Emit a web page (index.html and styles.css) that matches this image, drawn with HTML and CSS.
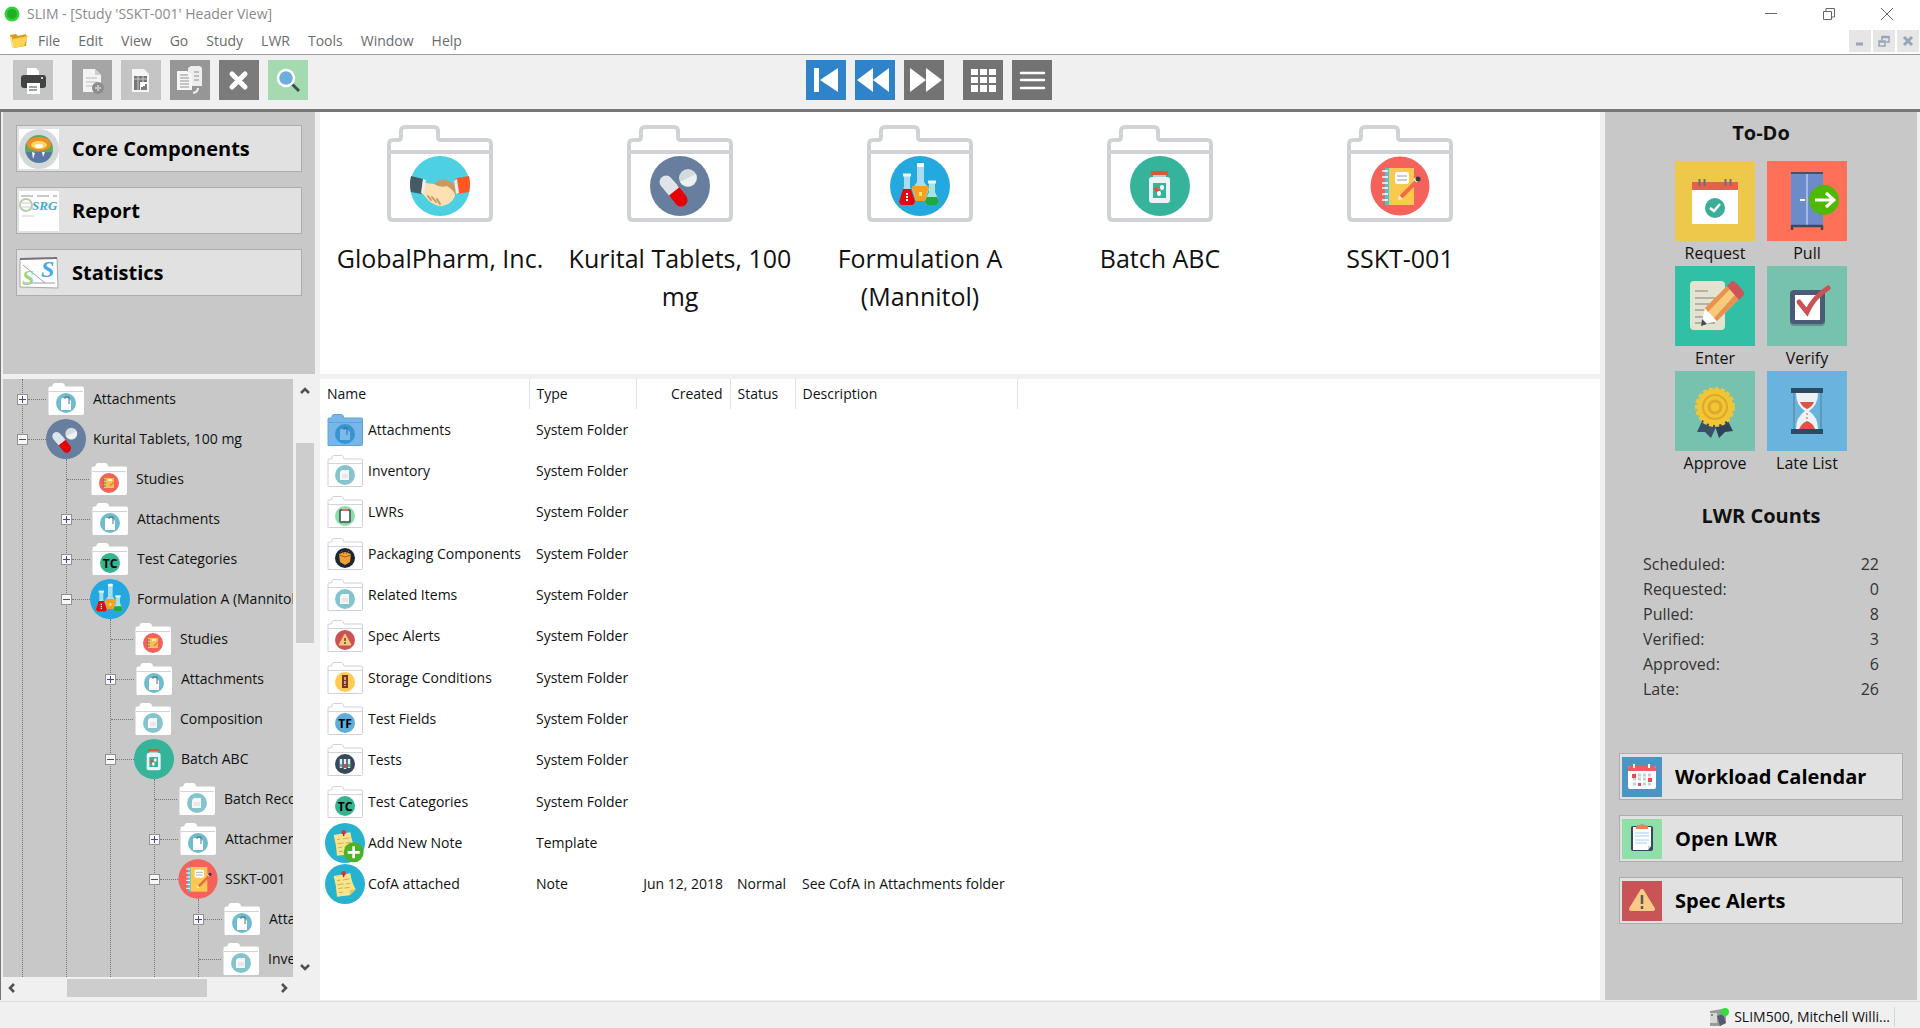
FILE: index.html
```html
<!DOCTYPE html>
<html lang="en">
  <head>
    <meta charset="UTF-8" />
    <meta name="viewport" content="width=device-width, initial-scale=1.0" />
    <title>SLIM - [Study 'SSKT-001' Header View]</title>
    <link rel="stylesheet" href="styles.css">
  </head>
  <body>
    <!-- shared icons -->
    <svg class="sprite" width="0" height="0" aria-hidden="true">
      <symbol id="client" viewBox="0 0 60 60">
        <circle cx="30" cy="30" r="30" fill="#4dd0e1" />
        <path d="M1 20L13 23L12 38L1 36Q-1 28 1 20Z" fill="#455a64" />
        <path d="M59 20L47 22L44 25L47 38L59 36Q61 28 59 20Z" fill="#ff5722" />
        <path d="M24 28Q30 22 36 24L45 28L46 38L38 42L27 36Z" fill="#c89a63" />
        <path d="M13 25L15 27L24 28Q30 32 37 30Q46 36 45 40Q42 48 32 50Q27 51 19 45L12 37Z" fill="#ffe0b2" />
        <path d="M18 40l3 4M22 41l4 5M27 43l3 5" stroke="#c89a63" stroke-width="2" fill="none" stroke-linecap="round" />
        <path d="M13 23l3 1l-2 14l-3-1z" fill="#eceff1" />
        <path d="M44 25l3-2l2 14l-3 1z" fill="#eceff1" />
      </symbol>
      <symbol id="pills" viewBox="0 0 60 60">
        <circle cx="30" cy="30" r="30" fill="#677e9e" />
        <path d="M16 26L24 35" stroke="#dde5ea" stroke-width="13" stroke-linecap="round" />
        <path d="M31 44L24 35" stroke="#e60000" stroke-width="13" stroke-linecap="round" />
        <path d="M19 39.500L29 31.500L24 25.500L14 33.500Z" fill="#dde5ea" />
        <circle cx="38" cy="22" r="9" fill="#d3dbde" />
        <path d="M30 26L46 18A9 9 0 0 1 30 26Z" fill="#eef1f2" />
      </symbol>
      <symbol id="flasks" viewBox="0 0 60 60">
        <circle cx="30" cy="30" r="30" fill="#24a8e0" />
        <path d="M27 9H34V26L39 33L35 45H26L22 33L27 26Z" fill="#a9dcf0" />
        <path d="M22 30H39L35 45H26Z" fill="#f9a01b" />
        <rect x="27" y="7" width="7" height="4" rx="1" fill="#fff" />
        <path d="M14 20H20V31L25 45Q25 49 22 49H12Q9 49 9 45L14 31Z" fill="#a9dcf0" />
        <path d="M13 33H21L25 45Q25 49 22 49H12Q9 49 9 45Z" fill="#e30613" />
        <path d="M13 19H21" stroke="#e8f6fb" stroke-width="3" />
        <path d="M17 37v8" stroke="#fff" stroke-width="2" stroke-dasharray="2 1" />
        <path d="M39 27H45V36L49 45Q49 49 46 49H38Q35 49 35 45L39 36Z" fill="#a9e4dc" />
        <path d="M37 41H47L49 45Q49 49 46 49H38Q35 49 35 45Z" fill="#1fa849" />
        <path d="M38 26H46" stroke="#e8f6fb" stroke-width="3" />
        <path d="M29 36h3v4h-3z" fill="#ffe08a" />
      </symbol>
      <symbol id="bottle" viewBox="0 0 60 60">
        <circle cx="30" cy="30" r="30" fill="#36b39b" />
        <rect x="21" y="15" width="17" height="4" fill="#d9583e" />
        <rect x="23" y="19" width="13" height="3" fill="#b8cfcf" />
        <rect x="19" y="21" width="21" height="26" rx="3" fill="#ecf3f6" />
        <rect x="23" y="27" width="13" height="15" fill="#36b39b" />
        <path d="M26 33l2 2" stroke="#d9583e" stroke-width="4" stroke-linecap="round" />
        <path d="M29 37l0 1M32 31l0 1" stroke="#fff" stroke-width="4" stroke-linecap="round" />
      </symbol>
      <symbol id="notebook" viewBox="0 0 60 60">
        <circle cx="30" cy="30" r="29.500" fill="#f5625c" />
        <rect x="15" y="12" width="5" height="37" fill="#4fc3d9" />
        <rect x="19" y="12" width="25" height="37" fill="#fcc94f" />
        <path d="M12 15h6M12 21h6M12 27h6M12 32h6M12 38h6M12 44h6" stroke="#fff" stroke-width="1.500" />
        <rect x="25" y="16" width="14" height="12" rx="2" fill="#fff" />
        <path d="M27 20h10M27 24h10" stroke="#8aa0ab" stroke-width="1.200" />
        <path d="M31 41L46 26" stroke="#ee6b45" stroke-width="4" />
        <path d="M28 44l1-5l4 4z" fill="#ffe9c8" />
        <path d="M45 25l2-2" stroke="#fff" stroke-width="4" />
        <circle cx="48" cy="23" r="2.500" fill="#3b3b3b" />
      </symbol>
      <symbol id="note" viewBox="0 0 60 60">
        <circle cx="30" cy="30" r="30" fill="#27b3d0" />
        <path d="M13 18L38 14Q40 28 46 38L37 47L18 49Q17 32 13 18Z" fill="#f9e48c" />
        <path d="M37 47L46 38L37 39Z" fill="#e2c765" />
        <path d="M18 25l5-1M27 24l10-2M19 31l9-1M31 30l7-1M20 37l6-1M29 36l8-1M21 43l6-1" stroke="#cfb154" stroke-width="1.500" />
        <circle cx="28" cy="14" r="3.500" fill="#d9353f" />
        <path d="M28 15v5" stroke="#a3303a" stroke-width="2" />
      </symbol>
      <symbol id="note-add" viewBox="0 0 60 60">
        <use href="#note" />
        <circle cx="43" cy="44" r="15" fill="#4cb226" />
        <path d="M43 35v18M34 44h18" stroke="#fff" stroke-width="4" />
      </symbol>
      <symbol id="folder" viewBox="0 0 36 32">
        <path d="M1 31.500V5Q1 4 2 4H4.500L5.500 1Q6 .5 7 .5H14.500Q15.500 .5 16 1.500L17 4H34.500Q35.500 4 35.500 5V30.500Q35.500 31.500 34.500 31.500H2Q1 31.500 1 31.500Z" stroke="currentColor" />
        <path d="M1 8.500H35" stroke="#d2d4dc" />
      </symbol>
      <symbol id="f-attach" viewBox="0 0 36 32">
        <use href="#folder" />
        <circle cx="18" cy="20" r="10" fill="#6dbdce" />
        <path d="M14 15H20L23 18V27H13V16Z" fill="#fff" />
        <path d="M17 16V14H21V21" stroke="#546a7a" fill="none" />
      </symbol>
      <symbol id="f-attach-selected" viewBox="0 0 36 32">
        <path d="M1 31.500V5Q1 4 2 4H4.500L5.500 1Q6 .5 7 .5H14.500Q15.500 .5 16 1.500L17 4H34.500Q35.500 4 35.500 5V30.500Q35.500 31.500 34.500 31.500H1Z" fill="#78b5e8" stroke="#5fa4dc" />
        <path d="M1 8.500H35" stroke="#62a3d8" />
        <circle cx="18" cy="20" r="10" fill="#3795cd" />
        <path d="M14 15H20L23 18V26H13V16Z" fill="#7db9ea" />
        <path d="M17 16V14H20V21" stroke="#2f6da4" fill="none" />
      </symbol>
      <symbol id="f-page" viewBox="0 0 36 32">
        <use href="#folder" />
        <circle cx="18" cy="20" r="10" fill="#84c5cd" />
        <path d="M15 15H22V25H13V17Z" fill="#f4f8fa" />
        <path d="M15 19h6v4h-6z" fill="#f1e3e3" />
      </symbol>
      <symbol id="f-study" viewBox="0 0 36 32">
        <use href="#folder" />
        <circle cx="18" cy="20" r="10" fill="#f3635a" />
        <rect x="13" y="15" width="10" height="10" fill="#fbc04d" />
        <path d="M12 17h3M12 20h3M12 23h3" stroke="#5d6f85" />
        <path d="M19 23l4-4" stroke="#ee7a45" stroke-width="1.500" />
        <path d="M17 17h4" stroke="#fff" stroke-width="1.500" />
      </symbol>
      <symbol id="f-tc" viewBox="0 0 36 32">
        <use href="#folder" />
        <circle cx="18" cy="20" r="10" fill="#36b391" />
        <text x="18" y="25" class="badge-text">TC</text>
      </symbol>
      <symbol id="f-tf" viewBox="0 0 36 32">
        <use href="#folder" />
        <circle cx="18" cy="20" r="10" fill="#5fadda" />
        <text x="18" y="25" class="badge-text">TF</text>
      </symbol>
      <symbol id="f-lwr" viewBox="0 0 36 32">
        <use href="#folder" />
        <circle cx="18" cy="20" r="10" fill="#8fdda6" />
        <rect x="13" y="14" width="10" height="12" rx="1" fill="#fff" stroke="#34495e" stroke-width="1.500" />
        <path d="M15 14h6" stroke="#e0705a" stroke-width="2" />
      </symbol>
      <symbol id="f-pack" viewBox="0 0 36 32">
        <use href="#folder" />
        <circle cx="18" cy="20" r="10" fill="#182931" />
        <path d="M12 16L18 14L24 16L23 24L18 27L13 24Z" fill="#f0a037" />
        <path d="M12 17l6 2l6-2M14 13l3 3M22 13l-3 3" stroke="#a85f18" fill="none" />
      </symbol>
      <symbol id="f-alert" viewBox="0 0 36 32">
        <use href="#folder" />
        <circle cx="18" cy="20" r="10" fill="#cb5355" />
        <path d="M18 14L24 25H12Z" fill="#f8c77b" stroke="#f8c77b" stroke-linejoin="round" />
        <path d="M18 18v3M18 22v2" stroke="#5b4636" stroke-width="1.500" />
      </symbol>
      <symbol id="f-storage" viewBox="0 0 36 32">
        <use href="#folder" />
        <circle cx="18" cy="20" r="10" fill="#fbcb52" />
        <rect x="15" y="13" width="6" height="13" fill="#7b3427" />
        <path d="M18 15v9" stroke="#e8c9a5" stroke-width="1.500" stroke-dasharray="3 1" />
      </symbol>
      <symbol id="f-tests" viewBox="0 0 36 32">
        <use href="#folder" />
        <circle cx="18" cy="20" r="10" fill="#37495b" />
        <path d="M14 15v9M18 15v10M22 15v9" stroke="#e8eef2" stroke-width="2.500" />
        <path d="M18 20v4" stroke="#e0483e" stroke-width="2" />
        <path d="M22 20v3" stroke="#40b882" stroke-width="2" />
        <path d="M14 20v3" stroke="#5fadda" stroke-width="2" />
      </symbol>
      <symbol id="big-folder" viewBox="0 0 106 98">
        <path d="M2 91V19Q2 15 6 15H11Q14 15 14 12V6Q14 2 18 2H47Q51 2 51 6V12Q51 15 54 15H100Q104 15 104 19V91Q104 95 100 95H6Q2 95 2 91Z" fill="#fff" stroke="#d0d3d6" stroke-width="4" />
        <path d="M2 27H104" stroke="#d0d3d6" stroke-width="4" />
      </symbol>
    </svg>

    <header class="titlebar">
      <svg class="app-icon" viewBox="0 0 16 16"><circle cx="8" cy="8" r="7.500" fill="#35d23c" /><circle cx="8" cy="8" r="5" fill="#1fae27" /></svg>
      <h1 class="title">SLIM - [Study 'SSKT-001' Header View]</h1>
      <div class="window-buttons">
        <button type="button" aria-label="Minimize"><svg viewBox="0 0 12 12"><path d="M0 5.500h12" /></svg></button>
        <button type="button" aria-label="Restore"><svg viewBox="0 0 12 12"><path d="M.5 3.500h8v8h-8zM3 3V.5h8.500V9H9" /></svg></button>
        <button type="button" aria-label="Close"><svg viewBox="0 0 12 12"><path d="M0 0l12 12M12 0L0 12" /></svg></button>
      </div>
    </header>

    <nav class="menubar">
      <svg class="menu-icon" viewBox="0 0 20 16"><path d="M1 2l6-1l2 2l8-2l1 3l-1 9l-13 2z" fill="#d99a20" /><path d="M4 6L19 3L15 13L4 15Z" fill="#fbd355" /><path d="M2 4l2 11" stroke="#f9e08a" stroke-width="2" /></svg>
      <button type="button">File</button>
      <button type="button">Edit</button>
      <button type="button">View</button>
      <button type="button">Go</button>
      <button type="button">Study</button>
      <button type="button">LWR</button>
      <button type="button">Tools</button>
      <button type="button">Window</button>
      <button type="button">Help</button>
      <div class="mdi-buttons">
        <button type="button" aria-label="Minimize view"><svg viewBox="0 0 12 12"><path d="M2 9h7" stroke-width="3" /></svg></button>
        <button type="button" aria-label="Restore view"><svg viewBox="0 0 12 12"><path d="M1 6h6v5h-6zM1 7h6M4 5V1.500h7V7H8M4 2.500h7" stroke-width="1.500" /></svg></button>
        <button type="button" aria-label="Close view"><svg viewBox="0 0 12 12"><path d="M2 2l8 8M10 2l-8 8" stroke-width="3" /></svg></button>
      </div>
    </nav>

    <div class="toolbar">
      <div class="tools">
        <button type="button" class="tool light" aria-label="Print">
          <svg viewBox="0 0 40 40"><path d="M14 8h9l3 3v6H14z" fill="#fff" /><rect x="8" y="15" width="25" height="13" rx="3" fill="#404447" /><rect x="14" y="23" width="13" height="11" fill="#fff" /><path d="M16 27h8M16 30h8" stroke="#404447" /><circle cx="29" cy="18" r="1" fill="#fff" /></svg>
        </button>
        <button type="button" class="tool mid spaced" aria-label="New document">
          <svg viewBox="0 0 40 40"><path d="M11 9h12l6 6v17H11z" fill="#f3f3f3" /><path d="M23 9v6h6" fill="#cfcfcf" /><path d="M14 18h11M14 22h11M14 26h8" stroke="#bbb" /><circle cx="26" cy="28" r="6" fill="#8d8d8d" /><path d="M26 25v6M23 28h6" stroke="#c5c5c5" stroke-width="2" /></svg>
        </button>
        <button type="button" class="tool light" aria-label="Report">
          <svg viewBox="0 0 40 40"><path d="M11 9h12l5 5v18H11z" fill="#f6f6f6" /><path d="M13 16h13v14H13z" fill="#777" /><path d="M17 16v14M22 16v6M13 19h13" stroke="#ccc" /><path d="M19 22h7v8h-7z" fill="#fff" /><path d="M21 30v-3M23 30v-4M25 30v-6" stroke="#555" stroke-width="1.500" /></svg>
        </button>
        <button type="button" class="tool dim" aria-label="Copy">
          <svg viewBox="0 0 40 40"><path d="M18 8l3-2h9l2 2v18H18z" fill="#eee" /><path d="M7 11h10l5 4v15H7z" fill="#f6f6f6" /><path d="M10 15h8M10 18h9M10 21h9M10 24h9M10 27h9M24 12h5M24 16h5M24 20h5" stroke="#909090" /><path d="M28 28q0 4-5 5" stroke="#eee" stroke-width="2" fill="none" /></svg>
        </button>
        <button type="button" class="tool dark" aria-label="Delete">
          <svg viewBox="0 0 40 40"><path d="M13 14l13 13M26 14L13 27" stroke="#fff" stroke-width="5" stroke-linecap="round" /></svg>
        </button>
        <button type="button" class="tool green" aria-label="Search">
          <svg viewBox="0 0 40 40"><path d="M24 24l7 7" stroke="#35524d" stroke-width="3" /><circle cx="18" cy="18" r="8" fill="#6caeda" stroke="#fff" stroke-width="2.500" /></svg>
        </button>
      </div>
      <div class="tools">
        <button type="button" class="tool blue" aria-label="First"><svg viewBox="0 0 40 40" fill="#fff"><path d="M8 8h5v24H8zM14 20L32 8v24z" /></svg></button>
        <button type="button" class="tool blue" aria-label="Previous"><svg viewBox="0 0 40 40" fill="#fff"><path d="M2 20L18 8v24zM18 20L34 8v24z" /></svg></button>
        <button type="button" class="tool gray" aria-label="Next"><svg viewBox="0 0 40 40" fill="#fff"><path d="M6 8v24l16-12zM22 8v24l16-12z" /></svg></button>
        <button type="button" class="tool gray spaced" aria-label="Grid view">
          <svg viewBox="0 0 40 40" fill="#fff"><path d="M8 9h7v6H8zM17 9h7v6h-7zM26 9h7v6h-7zM8 17h7v6H8zM17 17h7v6h-7zM26 17h7v6h-7zM8 25h7v7H8zM17 25h7v7h-7zM26 25h7v7h-7z" /></svg>
        </button>
        <button type="button" class="tool gray" aria-label="List view"><svg viewBox="0 0 40 40"><path d="M9 13h23M9 20h23M9 28h23" stroke="#fff" stroke-width="2.500" stroke-linecap="round" /></svg></button>
      </div>
    </div>

    <main class="workspace">
      <aside class="left">
        <div class="shortcuts">
          <button type="button" class="wide-button">
            <svg viewBox="0 0 40 40"><rect width="40" height="40" fill="#fff" /><circle cx="20" cy="20" r="20" fill="#d3d9dd" /><circle cx="20" cy="20" r="14" fill="#5cab5c" /><path d="M7 23H33Q31 33 20 34Q9 33 7 23Z" fill="#5c76a8" /><ellipse cx="20" cy="15" rx="12" ry="7" fill="#f28c28" /><ellipse cx="20" cy="16" rx="8" ry="4" fill="#ffd95a" /><ellipse cx="20" cy="17" rx="4" ry="2" fill="#fff" /><path d="M13 23l1 7l2-6zM23 23l1 5l2-5z" fill="#fff" /></svg>
            Core Components
          </button>
          <button type="button" class="wide-button">
            <svg viewBox="0 0 40 40"><rect width="40" height="40" fill="#fff" /><path d="M2 5h36" stroke="#c9c9c9" stroke-width="2" stroke-dasharray="12 4" /><circle cx="7" cy="14" r="6" fill="none" stroke="#b5cfa8" stroke-width="2" /><path d="M3 12h9M3 16h9M3 25h12" stroke="#ccc" /><text x="13" y="19" class="srg-text">SRG</text></svg>
            Report
          </button>
          <button type="button" class="wide-button">
            <svg viewBox="0 0 40 40"><path d="M1 6L38 5L39 35L1 34Z" fill="#fff" stroke="#a8a8a8" /><path d="M1 6L38 5" stroke="#77727f" stroke-width="2" /><path d="M4 12L26 30M4 30h32" stroke="#9aa0b4" /><text x="3" y="32" class="stat-green">S</text><text x="22" y="24" class="stat-blue">S</text></svg>
            Statistics
          </button>
        </div>

        <div class="tree-pane">
          <div class="tree">
            <ul>
              <li><div class="node"><i class="toggle plus"></i><svg class="f"><use href="#f-attach" /></svg>Attachments</div></li>
              <li>
                <div class="node"><i class="toggle"></i><svg><use href="#pills" /></svg>Kurital Tablets, 100 mg</div>
                <ul>
                  <li><div class="node"><svg class="f"><use href="#f-study" /></svg>Studies</div></li>
                  <li><div class="node"><i class="toggle plus"></i><svg class="f"><use href="#f-attach" /></svg>Attachments</div></li>
                  <li><div class="node"><i class="toggle plus"></i><svg class="f"><use href="#f-tc" /></svg>Test Categories</div></li>
                  <li>
                    <div class="node"><i class="toggle"></i><svg><use href="#flasks" /></svg>Formulation A (Mannitol)</div>
                    <ul>
                      <li><div class="node"><svg class="f"><use href="#f-study" /></svg>Studies</div></li>
                      <li><div class="node"><i class="toggle plus"></i><svg class="f"><use href="#f-attach" /></svg>Attachments</div></li>
                      <li><div class="node"><svg class="f"><use href="#f-page" /></svg>Composition</div></li>
                      <li>
                        <div class="node"><i class="toggle"></i><svg><use href="#bottle" /></svg>Batch ABC</div>
                        <ul>
                          <li><div class="node"><svg class="f"><use href="#f-page" /></svg>Batch Record</div></li>
                          <li><div class="node"><i class="toggle plus"></i><svg class="f"><use href="#f-attach" /></svg>Attachments</div></li>
                          <li>
                            <div class="node"><i class="toggle"></i><svg><use href="#notebook" /></svg>SSKT-001</div>
                            <ul>
                              <li><div class="node"><i class="toggle plus"></i><svg class="f"><use href="#f-attach" /></svg>Attachments</div></li>
                              <li><div class="node"><svg class="f"><use href="#f-page" /></svg>Inventory</div></li>
                            </ul>
                          </li>
                        </ul>
                      </li>
                    </ul>
                  </li>
                </ul>
              </li>
            </ul>
          </div>
          <div class="vscroll">
            <svg viewBox="0 0 10 10"><path d="M1 7l4-4l4 4" /></svg>
            <div class="track"><div class="thumb"></div></div>
            <svg viewBox="0 0 10 10"><path d="M1 3l4 4l4-4" /></svg>
          </div>
          <div class="hscroll">
            <svg viewBox="0 0 10 10"><path d="M7 1l-4 4l4 4" /></svg>
            <div class="track"><div class="thumb"></div></div>
            <svg viewBox="0 0 10 10"><path d="M3 1l4 4l-4 4" /></svg>
          </div>
        </div>
      </aside>

      <section class="center">
        <div class="path">
          <a class="crumb" href="#"><svg viewBox="0 0 106 98"><use href="#big-folder" /><use href="#client" x="23" y="31" width="60" height="60" /></svg>GlobalPharm, Inc.</a>
          <a class="crumb" href="#"><svg viewBox="0 0 106 98"><use href="#big-folder" /><use href="#pills" x="23" y="31" width="60" height="60" /></svg>Kurital Tablets, 100 mg</a>
          <a class="crumb" href="#"><svg viewBox="0 0 106 98"><use href="#big-folder" /><use href="#flasks" x="23" y="31" width="60" height="60" /></svg>Formulation A (Mannitol)</a>
          <a class="crumb" href="#"><svg viewBox="0 0 106 98"><use href="#big-folder" /><use href="#bottle" x="23" y="31" width="60" height="60" /></svg>Batch ABC</a>
          <a class="crumb" href="#"><svg viewBox="0 0 106 98"><use href="#big-folder" /><use href="#notebook" x="23" y="31" width="60" height="60" /></svg>SSKT-001</a>
        </div>

        <div class="list">
          <table class="items">
            <colgroup><col class="c-name"><col class="c-type"><col class="c-created"><col class="c-status"><col class="c-desc"></colgroup>
            <thead>
              <tr><th>Name</th><th>Type</th><th class="right">Created</th><th>Status</th><th>Description</th></tr>
            </thead>
            <tbody>
              <tr><td><div class="name"><svg class="f"><use href="#f-attach-selected" /></svg>Attachments</div></td><td>System Folder</td><td></td><td></td><td></td></tr>
              <tr><td><div class="name"><svg class="f"><use href="#f-page" /></svg>Inventory</div></td><td>System Folder</td><td></td><td></td><td></td></tr>
              <tr><td><div class="name"><svg class="f"><use href="#f-lwr" /></svg>LWRs</div></td><td>System Folder</td><td></td><td></td><td></td></tr>
              <tr><td><div class="name"><svg class="f"><use href="#f-pack" /></svg>Packaging Components</div></td><td>System Folder</td><td></td><td></td><td></td></tr>
              <tr><td><div class="name"><svg class="f"><use href="#f-page" /></svg>Related Items</div></td><td>System Folder</td><td></td><td></td><td></td></tr>
              <tr><td><div class="name"><svg class="f"><use href="#f-alert" /></svg>Spec Alerts</div></td><td>System Folder</td><td></td><td></td><td></td></tr>
              <tr><td><div class="name"><svg class="f"><use href="#f-storage" /></svg>Storage Conditions</div></td><td>System Folder</td><td></td><td></td><td></td></tr>
              <tr><td><div class="name"><svg class="f"><use href="#f-tf" /></svg>Test Fields</div></td><td>System Folder</td><td></td><td></td><td></td></tr>
              <tr><td><div class="name"><svg class="f"><use href="#f-tests" /></svg>Tests</div></td><td>System Folder</td><td></td><td></td><td></td></tr>
              <tr><td><div class="name"><svg class="f"><use href="#f-tc" /></svg>Test Categories</div></td><td>System Folder</td><td></td><td></td><td></td></tr>
              <tr><td><div class="name"><svg><use href="#note-add" /></svg>Add New Note</div></td><td>Template</td><td></td><td></td><td></td></tr>
              <tr><td><div class="name"><svg><use href="#note" /></svg>CofA attached</div></td><td>Note</td><td class="right">Jun 12, 2018</td><td>Normal</td><td>See CofA in Attachments folder</td></tr>
            </tbody>
          </table>
        </div>
      </section>

      <aside class="right-panel">
        <h2>To-Do</h2>
        <div class="todo">
          <button type="button">
            <svg viewBox="0 0 80 80"><rect width="80" height="80" fill="#edc84a" /><rect x="17" y="28" width="46" height="35" fill="#fff" /><rect x="17" y="21" width="46" height="8" fill="#e5604f" /><path d="M24.500 18v7M29.500 18v7M50.500 18v7M55.500 18v7" stroke="#6f6d78" stroke-width="2" /><circle cx="40" cy="47" r="10" fill="#3aae98" /><path d="M35 47l4 3l6-7" stroke="#fff" stroke-width="2.500" fill="none" /></svg>
            Request
          </button>
          <button type="button">
            <svg viewBox="0 0 80 80"><rect width="80" height="80" fill="#ff7058" /><rect x="24" y="12" width="32" height="52" fill="#6c8cc9" /><path d="M40 13v51" stroke="#b9c8e8" stroke-width="1.500" /><path d="M24 12h32" stroke="#485264" stroke-width="2" /><path d="M24 65h32M25 65v4M55 65v4" stroke="#3e4959" stroke-width="2.500" /><path d="M33 39h5" stroke="#fff" stroke-width="2" /><circle cx="57" cy="39" r="15" fill="#4fb800" /><path d="M48 39h18M59 32l8 7l-8 7" stroke="#fff" stroke-width="3" fill="none" /></svg>
            Pull
          </button>
          <button type="button">
            <svg viewBox="0 0 80 80"><rect width="80" height="80" fill="#31bfa6" /><rect x="15" y="15" width="35" height="49" rx="4" fill="#e4e2d0" /><path d="M20 25h13M20 32h20M20 38h16M20 44h14M20 51h12M20 57h20" stroke="#a3a294" stroke-width="1.500" /><path d="M26 59L30 42L42 55Z" fill="#fff" /><path d="M30 42L52 20L64 33L42 55Z" fill="#f7cb7b" /><path d="M30 42L52 20L55 23L33 46ZM39 52L60 29L64 33L42 55Z" fill="#e8924f" /><path d="M52 20L57 15Q60 14 69 26Q70 28 68 30L64 34Z" fill="#cb5559" /><path d="M26 60L27 53L32 58Z" fill="#414a52" /></svg>
            Enter
          </button>
          <button type="button">
            <svg viewBox="0 0 80 80"><rect width="80" height="80" fill="#76c2af" /><rect x="23" y="26" width="35" height="34" rx="4" fill="#5a9586" /><rect x="23" y="24" width="35" height="34" rx="4" fill="#4b5a76" /><rect x="28" y="29" width="25" height="25" fill="#fff" /><path d="M32 36L40 46Q46 32 61 22" stroke="#cb5156" stroke-width="5" fill="none" stroke-linecap="round" /></svg>
            Verify
          </button>
          <button type="button">
            <svg viewBox="0 0 80 80"><rect width="80" height="80" fill="#76c2af" /><path d="M28 48L22 61L30 61L36 67L42 54Z" fill="#3b5068" /><path d="M52 48L58 60L50 61L44 67L39 52Z" fill="#2f4358" /><circle cx="40" cy="36" r="18" fill="#f2c535" /><circle cx="40" cy="36" r="18" fill="none" stroke="#f2c535" stroke-width="4" stroke-dasharray="4 2" /><circle cx="40" cy="36" r="12" fill="none" stroke="#dba92b" stroke-width="2" /><circle cx="40" cy="36" r="6" fill="none" stroke="#dba92b" stroke-width="3" /></svg>
            Approve
          </button>
          <button type="button">
            <svg viewBox="0 0 80 80"><rect width="80" height="80" fill="#69b4de" /><path d="M27 22v36M54 22v36" stroke="#587d98" /><path d="M29 22H51Q51 34 42 40Q51 46 51 58H29Q29 46 38 40Q29 34 29 22Z" fill="#edf2f4" /><path d="M33 31H47Q45 36 40 38Q35 36 33 31Z" fill="#de5344" /><path d="M32 58Q35 52 40 50Q46 52 48 58Z" fill="#de5344" /><path d="M40 42v6" stroke="#de5344" stroke-dasharray="2 2" /><path d="M24 19.500h32M24 60.500h32" stroke="#2d4a63" stroke-width="5" /></svg>
            Late List
          </button>
        </div>

        <h2>LWR Counts</h2>
        <table class="counts">
          <tr><th scope="row">Scheduled:</th><td>22</td></tr>
          <tr><th scope="row">Requested:</th><td>0</td></tr>
          <tr><th scope="row">Pulled:</th><td>8</td></tr>
          <tr><th scope="row">Verified:</th><td>3</td></tr>
          <tr><th scope="row">Approved:</th><td>6</td></tr>
          <tr><th scope="row">Late:</th><td>26</td></tr>
        </table>

        <div class="shortcuts">
          <button type="button" class="wide-button">
            <svg viewBox="0 0 40 40"><rect width="40" height="40" fill="#4b94c3" /><rect x="6" y="9" width="28" height="23" rx="2" fill="#fff" /><path d="M6 14V11Q6 9 8 9H32Q34 9 34 11V14Z" fill="#f45a66" /><path d="M12 7v4M27 7v4" stroke="#fff" stroke-width="2" /><path d="M11 18h20M11 22h20M11 27h20" stroke="#c9cfd8" stroke-width="3" stroke-dasharray="3 2" /><path d="M10 17h4v4h-4zM26 21h4v4h-4zM16 26h3v3h-3z" fill="#e94b5b" /></svg>
            Workload Calendar
          </button>
          <button type="button" class="wide-button">
            <svg viewBox="0 0 40 40"><rect width="40" height="40" fill="#90dfa9" /><rect x="9" y="7" width="22" height="25" rx="2" fill="#34495e" /><path d="M11 8H29V27L26 31H11Z" fill="#fff" /><path d="M29 27L26 31V27Z" fill="#c6d3da" /><path d="M14 8q0-2 4-2q2-2 4 0q4 0 4 2v2H14z" fill="#e98058" /><path d="M13 14h14M13 17h14M13 21h14M13 24h12" stroke="#a3cff3" /></svg>
            Open LWR
          </button>
          <button type="button" class="wide-button">
            <svg viewBox="0 0 40 40"><rect width="40" height="40" fill="#c95457" /><path d="M20 10L31 28H9Z" fill="#f7cb83" stroke="#f7cb83" stroke-width="4" stroke-linejoin="round" /><path d="M20 14v9M20 25v3" stroke="#59585a" stroke-width="2.500" /></svg>
            Spec Alerts
          </button>
        </div>
      </aside>
    </main>

    <footer class="statusbar">
      <svg viewBox="0 0 20 18"><path d="M1 3l12-2l4 4v10l-6 3H1z" fill="#9a9a9a" /><path d="M1 5h7v10H1z" fill="#d5d8d5" /><circle cx="3" cy="7" r="1" fill="#2a9a2a" /><path d="M8 8l6-2l3 9l-6 3z" fill="#555b6e" /><circle cx="16" cy="4" r="4" fill="#2fe03a" /></svg>
      <span class="user">SLIM500, Mitchell Willi...</span>
    </footer>
  </body>
</html>
```
FILE: styles.css
```css
* {
  box-sizing: border-box;
}
body {
  margin: 0;
  min-height: 100vh;
  display: flex;
  flex-direction: column;
  background: #f0f0f0;
  color: #111;
  font-family: "Open Sans", "Noto Sans", sans-serif;
  font-size: 14px;
  line-height: 20px;
}
button {
  padding: 0;
  border: 0;
  background: none;
  color: inherit;
  font: inherit;
}
svg {
  display: block;
  flex: none;
}
.sprite {
  position: absolute;
}

/* title + menu */
.titlebar {
  display: flex;
  align-items: center;
  height: 28px;
  padding: 0 4px;
  background: #fff;
}
.app-icon {
  width: 16px;
  height: 16px;
}
.title {
  flex: 1;
  margin: 0 0 0 7px;
  color: #8a8a8a;
  font-size: 14px;
  font-weight: 400;
}
.window-buttons {
  display: flex;
}
.window-buttons button {
  width: 58px;
  height: 28px;
}
.window-buttons svg {
  width: 12px;
  height: 12px;
  margin: auto;
  fill: none;
  stroke: #666;
}
.menubar {
  display: flex;
  align-items: center;
  gap: 18px;
  height: 27px;
  padding-left: 9px;
  background: #fff;
  border-bottom: 1px solid #9c9c9c;
  color: #6b6b6b;
}
.menu-icon {
  width: 20px;
  height: 16px;
  margin-right: -9px;
}
.mdi-buttons {
  display: flex;
  gap: 2px;
  margin-left: auto;
  padding-right: 1px;
}
.mdi-buttons button {
  width: 22px;
  height: 22px;
  background: #e6e6e6;
}
.mdi-buttons svg {
  width: 12px;
  height: 12px;
  margin: auto;
  fill: none;
  stroke: #97a5b5;
}

/* toolbar */
.toolbar {
  display: grid;
  grid-template-columns: 42% 1fr;
  padding: 5px 0 9px;
}
.tools {
  display: flex;
  gap: 9px;
}
.tools:first-child {
  padding-left: 13px;
}
.tool {
  width: 40px;
  height: 40px;
}
.spaced {
  margin-left: 10px;
}
.light {
  background: #c5c5c5;
}
.mid {
  background: #a5a5a5;
}
.dim {
  background: #969696;
}
.dark {
  background: #7b7b7b;
}
.green {
  background: #a5d9af;
}
.blue {
  background: #2f83cb;
}
.gray {
  background: #737373;
}

/* three panes */
.workspace {
  flex: 1;
  display: grid;
  grid-template-columns: 312px 1fr 312px;
  gap: 5px;
  padding: 0 3px 0 2px;
  border-top: 3px solid #767676;
  border-left: 1px solid #767676;
}
.left,
.center {
  display: grid;
  grid-template-rows: 262px 1fr;
  gap: 5px;
  min-width: 0;
}
.left .shortcuts {
  background: #c8c8c8;
  padding: 13px;
}
.shortcuts {
  display: flex;
  flex-direction: column;
  gap: 15px;
}
.wide-button {
  display: flex;
  align-items: center;
  gap: 13px;
  height: 47px;
  padding-left: 2px;
  background: #e1e1e1;
  border: 1px solid #adadad;
  color: #000;
  font-size: 20px;
  font-weight: 700;
  white-space: nowrap;
}
.wide-button svg {
  width: 40px;
  height: 40px;
}
.srg-text {
  fill: #3fa9cf;
  font: italic bold 13px "Liberation Serif", serif;
}
.stat-green {
  fill: #9ad77c;
  font: italic bold 22px "Liberation Serif", serif;
}
.stat-blue {
  fill: #45a9e6;
  font: italic bold 24px "Liberation Serif", serif;
}

/* tree */
.tree-pane {
  display: grid;
  grid-template-columns: 1fr 20px;
  grid-template-rows: 1fr 18px;
  gap: 2px;
  padding-bottom: 3px;
  height: 621px;
}
.tree {
  overflow: hidden;
  background: #c8c8c8;
}
.tree ul {
  margin: 0;
  padding: 0;
  list-style: none;
  border-left: 1px dotted #777;
}
.tree > ul {
  margin-left: 19px;
}
.tree ul ul {
  margin-left: 43px;
}
.node {
  display: flex;
  align-items: center;
  gap: 7px;
  height: 40px;
  white-space: nowrap;
}
.node::before {
  content: "";
  flex: none;
  width: 22px;
  margin-right: -7px;
  border-top: 1px dotted #777;
}
.node svg,
.name svg {
  width: 40px;
  height: 40px;
}
.node svg.f,
.name svg.f {
  height: 32px;
  fill: #fff;
  color: #fff;
}
.toggle {
  position: relative;
  flex: none;
  width: 11px;
  height: 11px;
  margin: 0 4px 0 -6px;
  order: -1;
  border: 1px solid #919191;
  background: linear-gradient(#3a4f9c, #3a4f9c) center / 7px 1px no-repeat, #f7f7f7;
}
.plus {
  background: linear-gradient(#3a4f9c, #3a4f9c) center / 7px 1px no-repeat, linear-gradient(#3a4f9c, #3a4f9c) center / 1px 7px no-repeat, #f7f7f7;
}
.node:has(.toggle)::before {
  width: 18px;
  margin-left: -11px;
}
.badge-text {
  fill: #000;
  font: bold 12px "Open Sans", sans-serif;
  text-anchor: middle;
}

/* scrollbars */
.vscroll,
.hscroll {
  display: flex;
  align-items: center;
}
.vscroll {
  flex-direction: column;
  padding: 7px 0 5px;
}
.hscroll {
  padding: 0 4px;
}
.vscroll svg,
.hscroll svg {
  width: 10px;
  height: 10px;
  fill: none;
  stroke: #505050;
  stroke-width: 2.5;
}
.track {
  flex: 1;
}
.vscroll .thumb {
  width: 18px;
  height: 200px;
  margin-top: 47px;
  background: #cdcdcd;
}
.hscroll .thumb {
  width: 140px;
  height: 18px;
  margin-left: 50px;
  background: #cdcdcd;
}

/* center */
.path {
  display: flex;
  padding-top: 13px;
  background: #fff;
}
.crumb {
  flex: 0 1 240px;
  padding: 0 5px;
  color: #111;
  font-size: 25px;
  line-height: 38px;
  text-align: center;
  text-decoration: none;
}
.crumb svg {
  width: 106px;
  height: 98px;
  margin: 0 auto 16px;
}
.list {
  background: #fff;
}
.items {
  table-layout: fixed;
  width: 698px;
  height: 526px;
  border-collapse: collapse;
}
.c-name {
  width: 209px;
}
.c-type {
  width: 107px;
}
.c-created {
  width: 94px;
}
.c-status {
  width: 65px;
}
.items th {
  height: 30px;
  padding: 0 7px;
  border-right: 1px solid #e2e2e2;
  font-weight: 400;
  text-align: left;
}
.items td {
  padding: 0 7px;
  white-space: nowrap;
}
.items .right {
  text-align: right;
}
.items td:first-child {
  padding: 0 0 0 5px;
}
.name {
  display: flex;
  align-items: center;
  gap: 3px;
  height: 40px;
}
.name svg.f {
  color: #cfd0da;
}

/* right */
.right-panel {
  padding: 5px 14px 0;
  background: #c8c8c8;
}
.right-panel h2 {
  margin: 0;
  font-size: 20px;
  line-height: 32px;
  text-align: center;
}
.todo {
  display: grid;
  grid-template-columns: 80px 80px;
  justify-content: center;
  column-gap: 12px;
  margin: 12px 0 24px;
}
.todo button {
  display: flex;
  flex-direction: column;
  align-items: center;
  font-size: 16px;
  line-height: 25px;
  white-space: nowrap;
}
.todo svg {
  width: 80px;
  height: 80px;
}
.counts {
  width: 236px;
  margin: 20px auto 51px 24px;
  border-collapse: collapse;
  color: #333;
  font-size: 16px;
  line-height: 25px;
}
.counts th,
.counts td {
  padding: 0;
  font-weight: 400;
  text-align: left;
}
.counts td {
  text-align: right;
}

.statusbar {
  display: flex;
  align-items: center;
  justify-content: flex-end;
  gap: 5px;
  height: 28px;
  margin-top: 1px;
  padding: 2px 25px 0 0;
  border-top: 1px solid #dcdcdc;
}
.statusbar svg {
  width: 20px;
  height: 18px;
}
.user {
  padding-right: 4px;
  border-right: 1px solid #d5d5d5;
}
```
